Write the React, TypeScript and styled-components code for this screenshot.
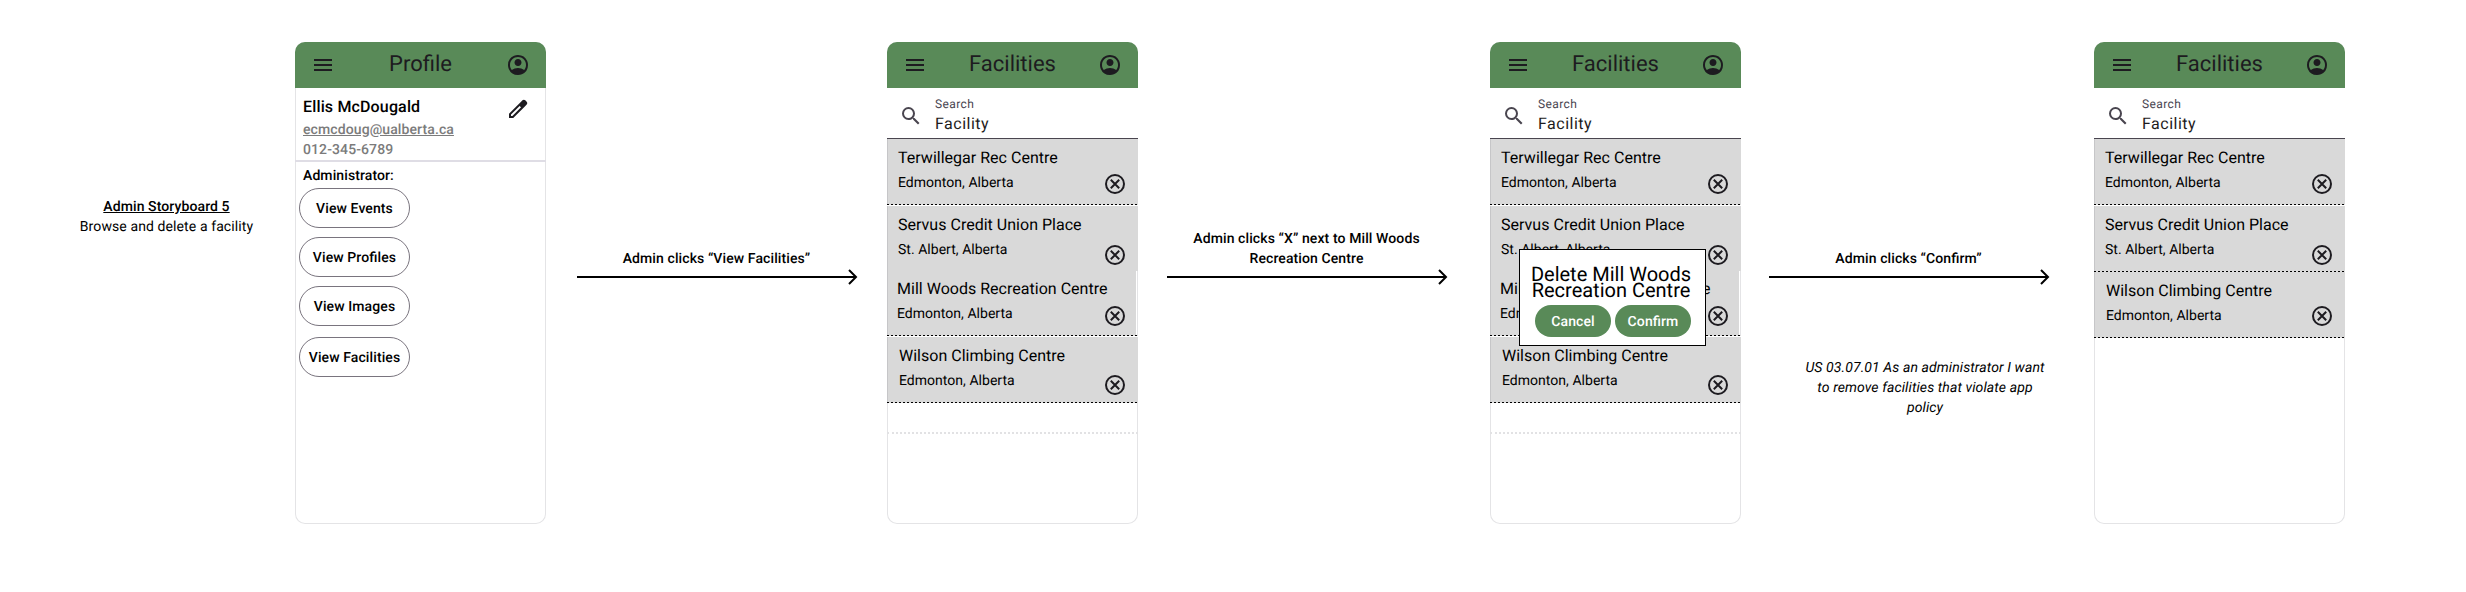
import React from "react";
import styled, { createGlobalStyle } from "styled-components";

const GlobalStyle = createGlobalStyle`
  * { box-sizing: border-box; }
  body {
    margin: 0;
    background: #fff;
    color: #000;
    font-family: Roboto, "Liberation Sans", sans-serif;
    font-size: 14px;
    line-height: 20px;
    letter-spacing: 0.1px;
    font-feature-settings: "liga" 1;
    text-rendering: geometricPrecision;
  }
`;

const Board = styled.main`
  display: flex;
  align-items: flex-start;
  width: 2466px;
  height: 592px;
  padding-top: 42px;
  overflow: hidden;
`;

const Intro = styled.header`
  width: 295px;
  padding: 155px 0 0 38px;
  text-align: center;
`;

const IntroTitle = styled.h1`
  margin: 0;
  font-size: 14px;
  font-weight: 500;
  line-height: 20px;
  text-decoration: underline;
`;

const Text = styled.p`
  margin: 0;
`;

const City = styled.p`
  margin: 0;
  letter-spacing: 0.03px;
`;

const Phone = styled.section`
  position: relative;
  display: flex;
  flex-direction: column;
  flex: none;
  width: 251px;
  height: 482px;
  border-radius: 10px;
  box-shadow: inset 0 0 0 1px #e4e4e6;
`;

const AppBar = styled.header`
  display: flex;
  align-items: center;
  justify-content: space-between;
  height: 46px;
  padding: 0 16px;
  border-radius: 10px 10px 0 0;
  background: #598a58;
  color: #1d1b20;
`;

const AppTitle = styled.h2`
  margin: 0;
  font-size: 22px;
  font-weight: 400;
  line-height: 28px;
  letter-spacing: 0;
`;

const Svg = styled.svg`
  display: block;
  flex: none;
  width: 24px;
  height: 24px;
  fill: currentColor;
`;

const Contact = styled.div`
  display: flex;
  justify-content: space-between;
  height: 74px;
  padding: 8px 16px 0 8px;
  border-bottom: 2px solid #dfdde5;
  color: #1d1b20;
`;

const EditSlot = styled.div`
  padding-top: 1px;
`;

const Name = styled.h3`
  margin: 0 0 3px;
  color: #000;
  font-size: 16px;
  font-weight: 500;
  line-height: 21px;
  letter-spacing: 0.15px;
`;

const Detail = styled.p<{ $underlined?: boolean }>`
  margin: 0;
  color: #7b7b7b;
  font-weight: 500;
  text-decoration: ${(p) => (p.$underlined ? "underline" : "none")};
`;

const Role = styled.p`
  margin: 0;
  padding: 4px 8px 2px;
  font-weight: 500;
`;

const ActionList = styled.div`
  display: flex;
  flex-direction: column;
  gap: 9px;
  padding-left: 4px;
`;

const OutlineButton = styled.button<{ $spaced?: boolean }>`
  width: 111px;
  height: 40px;
  margin: ${(p) => (p.$spaced ? "2px" : "0")} 0 0;
  padding: 2px 0 0;
  border: 1px solid #79747e;
  border-radius: 20px;
  background: #fff;
  color: #000;
  font: 500 14px/20px Roboto, sans-serif;
  font-feature-settings: "liga" 1;
  letter-spacing: 0.1px;
  text-rendering: inherit;
`;

const SearchField = styled.div`
  display: flex;
  gap: 12px;
  height: 51px;
  padding: 8px 12px 0;
  border-bottom: 1px solid #49454f;
  background: #fff;
  color: #49454f;
`;

const SearchIconBox = styled.div`
  padding-top: 8px;
`;

const SearchLabel = styled.div`
  font-size: 12px;
  line-height: 16px;
  letter-spacing: 0.4px;
`;

const SearchValue = styled.div`
  color: #1d1b20;
  font-size: 16px;
  line-height: 24px;
  letter-spacing: 0.5px;
`;

const FacilityRow = styled.article<{ $shift: number; $narrow: boolean }>`
  display: flex;
  width: ${(p) => (p.$narrow ? 249 : 251)}px;
  height: ${(p) => (p.$narrow ? 64 : 65)}px;
  padding: ${(p) => (p.$narrow ? "6px 9px" : "7px 11px")} 0 ${(p) => 10 + p.$shift}px;
  border-left: 1px solid #c6c6c8;
  background: #d9d9d9;
`;

const FacilityInfo = styled.div`
  flex: 1;
  min-width: 0;
`;

const FacilityName = styled.h3`
  margin: 0 0 3px;
  font-size: 16px;
  font-weight: 400;
  line-height: 24px;
  letter-spacing: 0.015px;
  white-space: nowrap;
`;

const Divider = styled.div<{ $gap: number }>`
  height: ${(p) => 1 + p.$gap}px;
  border-bottom: ${(p) => p.$gap}px solid #fff;
  background: repeating-linear-gradient(90deg, #000 0 2.3px, #dedede 2.3px 4px);
`;

const RemoveSlot = styled.div<{ $top: number }>`
  padding-top: ${(p) => p.$top}px;
  color: #1d1b20;
`;

const FaintDivider = styled.div`
  height: 31px;
  border-bottom: 2px dotted #e2e2e4;
`;

const Step = styled.div<{ $width: number; $inset: number }>`
  flex: none;
  width: ${(p) => p.$width}px;
  padding-left: ${(p) => p.$inset}px;
`;

const StepLabel = styled.div`
  display: flex;
  align-items: flex-end;
  justify-content: center;
  width: 279px;
  height: 227px;
  font-weight: 500;
  text-align: center;
`;

const ArrowSvg = styled.svg`
  display: block;
  width: 282px;
  height: 16px;
  fill: none;
  stroke: #000;
  stroke-width: 2;
`;

const Story = styled.p`
  width: 250px;
  margin: 73px 0 0 31px;
  font-style: italic;
  text-align: center;
`;

const Dialog = styled.div`
  position: absolute;
  top: 207px;
  left: 29px;
  width: 187px;
  height: 97px;
  padding: 16px 0 0;
  border: 1px solid #000;
  background: #fff;
  text-align: center;
`;

const DialogTitle = styled.h3`
  margin: 0 0 7px;
  padding-right: 3px;
  font-size: 20px;
  font-weight: 400;
  line-height: 16px;
  letter-spacing: 0;
  white-space: nowrap;
`;

const DialogActions = styled.div`
  display: flex;
  gap: 4px;
  padding-left: 15px;
`;

const FilledButton = styled.button`
  width: 76px;
  height: 32px;
  padding: 2px 0 0;
  border: 0;
  border-radius: 16px;
  background: #598a58;
  color: #fff;
  font: 500 14px/20px Roboto, sans-serif;
  font-feature-settings: "liga" 1;
  letter-spacing: 0.1px;
  text-rendering: inherit;
`;

const Glyph = ({ d }: { d: string }) => (
  <Svg viewBox="0 0 24 24">
    <path d={d} />
  </Svg>
);

const MENU = "M3 18h18v-2H3v2zm0-5h18v-2H3v2zm0-7v2h18V6H3z";
const ACCOUNT =
  "M5.85 17.1c.85-.65 1.8-1.16 2.85-1.54A9.7 9.7 0 0 1 12 15c1.15 0 2.25.19 3.3.56s2 .89 2.85 1.54a7.7 7.7 0 0 0 1.36-2.33A7.9 7.9 0 0 0 20 12c0-2.22-.78-4.1-2.34-5.66S14.22 4 12 4s-4.1.78-5.66 2.34S4 9.78 4 12c0 .98.16 1.91.49 2.78.33.86.78 1.64 1.36 2.32zM12 13c-.98 0-1.81-.34-2.49-1.01A3.4 3.4 0 0 1 8.5 9.5c0-.98.34-1.81 1.01-2.49A3.4 3.4 0 0 1 12 6c.98 0 1.81.34 2.49 1.01.67.68 1.01 1.51 1.01 2.49s-.34 1.81-1.01 2.49A3.4 3.4 0 0 1 12 13zm0 9a10 10 0 0 1-9.21-6.1A9.7 9.7 0 0 1 2 12a10 10 0 0 1 6.1-9.21A9.7 9.7 0 0 1 12 2a10 10 0 0 1 9.21 6.1c.53 1.22.79 2.52.79 3.9a10 10 0 0 1-6.1 9.21c-1.22.53-2.52.79-3.9.79z";
const SEARCH =
  "M15.5 14h-.79l-.28-.27A6.47 6.47 0 0 0 16 9.5 6.5 6.5 0 1 0 9.5 16c1.61 0 3.09-.59 4.23-1.57l.27.28v.79l5 4.99L20.49 19l-4.99-5zm-6 0C7.01 14 5 11.99 5 9.5S7.01 5 9.5 5 14 7.01 14 9.5 11.99 14 9.5 14z";
const EDIT =
  "M5 19h1.4l8.63-8.63-1.4-1.4L5 17.6V19zM19.3 8.93l-4.25-4.2 1.4-1.4A1.92 1.92 0 0 1 17.86 2.75c.56 0 1.03.2 1.41.58l1.4 1.4c.38.38.58.85.6 1.39.02.55-.17 1.01-.55 1.39L19.3 8.93zM17.85 10.4 7.25 21H3v-4.25L15.05 4.73l4.25 4.2z";

const RemoveIcon = () => (
  <Svg viewBox="0 0 24 24">
    <g fill="none" stroke="currentColor" strokeWidth="2">
      <circle cx="12" cy="12" r="9" />
      <path d="M7.8 7.8l8.4 8.4M16.2 7.8l-8.4 8.4" />
    </g>
  </Svg>
);

const PencilIcon = () => (
  <Svg viewBox="0 0 24 24">
    <path fillRule="evenodd" d={EDIT} />
  </Svg>
);

const Bar = ({ title }: { title: string }) => (
  <AppBar>
    <Glyph d={MENU} />
    <AppTitle>{title}</AppTitle>
    <Glyph d={ACCOUNT} />
  </AppBar>
);

type Facility = {
  name: string;
  city: string;
  iconTop: number;
  shift?: number;
  divider?: number;
  narrow?: boolean;
};

const terwillegar: Facility = { name: "Terwillegar Rec Centre", city: "Edmonton, Alberta", iconTop: 26, divider: 1 };
const servus: Facility = { name: "Servus Credit Union Place", city: "St. Albert, Alberta", iconTop: 30 };
const millWoods: Facility = {
  name: "Mill Woods Recreation Centre",
  city: "Edmonton, Alberta",
  iconTop: 27,
  shift: -1,
  divider: 1,
  narrow: true,
};
const wilson: Facility = { name: "Wilson Climbing Centre", city: "Edmonton, Alberta", iconTop: 29, shift: 1, divider: 0 };

const fullList = [terwillegar, servus, millWoods, wilson];
const remainingList = [terwillegar, { ...servus, divider: 0 }, { ...wilson, iconTop: 25 }];

type FacilitiesPhoneProps = { list: Facility[]; faint?: boolean; children?: React.ReactNode };

const FacilitiesPhone = ({ list, faint, children }: FacilitiesPhoneProps) => (
  <Phone>
    <Bar title="Facilities" />
    <SearchField>
      <SearchIconBox>
        <Glyph d={SEARCH} />
      </SearchIconBox>
      <div>
        <SearchLabel>Search</SearchLabel>
        <SearchValue>Facility</SearchValue>
      </div>
    </SearchField>
    {list.map((f) => (
      <React.Fragment key={f.name}>
        <FacilityRow $shift={f.shift ?? 0} $narrow={!!f.narrow}>
          <FacilityInfo>
            <FacilityName>{f.name}</FacilityName>
            <City>{f.city}</City>
          </FacilityInfo>
          <RemoveSlot $top={f.iconTop}>
            <RemoveIcon />
          </RemoveSlot>
        </FacilityRow>
        {f.divider !== undefined && <Divider $gap={f.divider} />}
      </React.Fragment>
    ))}
    {faint && <FaintDivider />}
    {children}
  </Phone>
);

const Arrow = () => (
  <ArrowSvg viewBox="0 0 282 16">
    <path d="M0 8h279M272 1l7 7-7 7" />
  </ArrowSvg>
);

export default function App() {
  return (
    <>
      <GlobalStyle />
      <Board>
        <Intro>
          <IntroTitle>Admin Storyboard 5</IntroTitle>
          <Text>Browse and delete a facility</Text>
        </Intro>
        <Phone>
          <Bar title="Profile" />
          <Contact>
            <div>
              <Name>Ellis McDougald</Name>
              <Detail $underlined>ecmcdoug@ualberta.ca</Detail>
              <Detail>012-345-6789</Detail>
            </div>
            <EditSlot>
              <PencilIcon />
            </EditSlot>
          </Contact>
          <Role>Administrator:</Role>
          <ActionList>
            <OutlineButton>View Events</OutlineButton>
            <OutlineButton>View Profiles</OutlineButton>
            <OutlineButton>View Images</OutlineButton>
            <OutlineButton $spaced>View Facilities</OutlineButton>
          </ActionList>
        </Phone>
        <Step $width={341} $inset={31}>
          <StepLabel>Admin clicks “View Facilities”</StepLabel>
          <Arrow />
        </Step>
        <FacilitiesPhone list={fullList} faint />
        <Step $width={352} $inset={29}>
          <StepLabel>
            <Text>
              Admin clicks “X” next to Mill Woods
              <br />
              Recreation Centre
            </Text>
          </StepLabel>
          <Arrow />
        </Step>
        <FacilitiesPhone list={fullList} faint>
          <Dialog>
            <DialogTitle>
              Delete Mill Woods
              <br />
              Recreation Centre
            </DialogTitle>
            <DialogActions>
              <FilledButton>Cancel</FilledButton>
              <FilledButton>Confirm</FilledButton>
            </DialogActions>
          </Dialog>
        </FacilitiesPhone>
        <Step $width={353} $inset={28}>
          <StepLabel>Admin clicks “Confirm”</StepLabel>
          <Arrow />
          <Story>US 03.07.01 As an administrator I want to remove facilities that violate app policy</Story>
        </Step>
        <FacilitiesPhone list={remainingList} />
      </Board>
    </>
  );
}
